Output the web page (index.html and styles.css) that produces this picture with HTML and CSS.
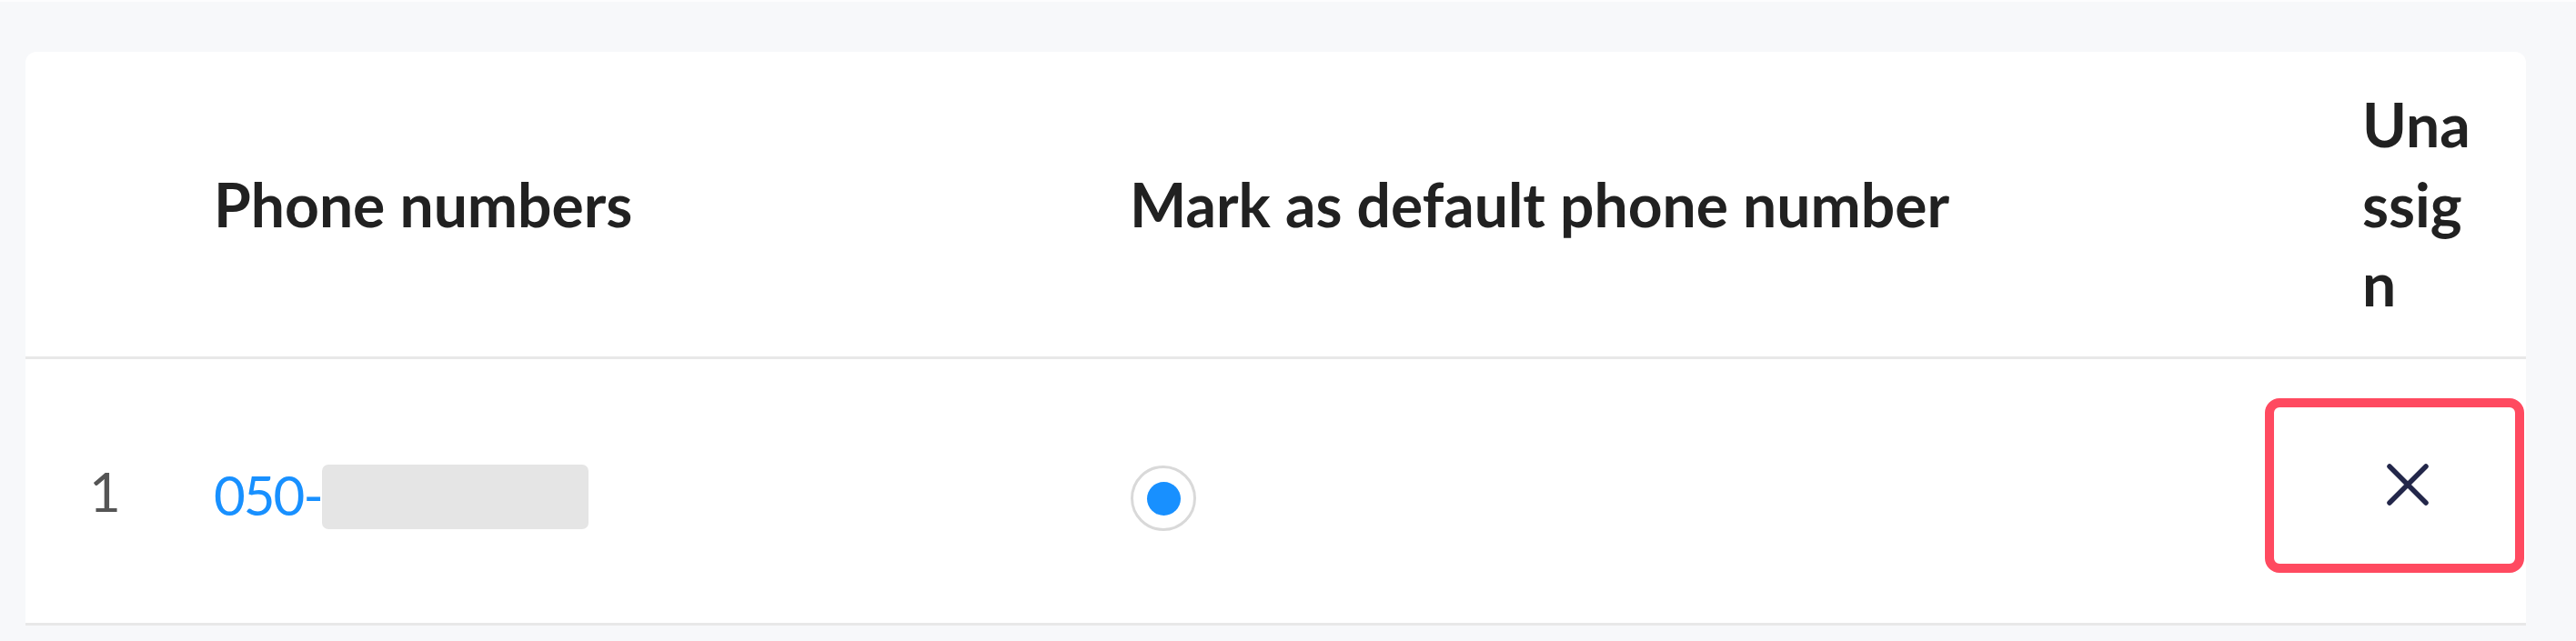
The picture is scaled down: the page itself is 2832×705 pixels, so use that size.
FILE: index.html
```html
<!DOCTYPE html>
<html lang="en">
<head>
<meta charset="utf-8">
<title>Phone numbers</title>
<link rel="stylesheet" href="styles.css">
</head>
<body>
<div class="page">
  <div class="card">
    <table class="phones">
      <colgroup>
        <col class="c-index">
        <col class="c-number">
        <col class="c-default">
        <col class="c-unassign">
      </colgroup>
      <thead>
        <tr>
          <th class="cell-index"></th>
          <th>Phone numbers</th>
          <th>Mark as default phone number</th>
          <th class="cell-unassign">Unassign</th>
        </tr>
      </thead>
      <tbody>
        <tr>
          <td class="cell-index">1</td>
          <td><a class="number" href="#">050-</a><span class="redacted"></span></td>
          <td><span class="radio"><span class="radio-dot"></span></span></td>
          <td class="cell-unassign">
            <button class="unassign" type="button" aria-label="Unassign">
              <svg width="48" height="48" viewBox="0 0 48 48"><path d="M4 4 L44 44 M44 4 L4 44" stroke="#23274a" stroke-width="5.5" stroke-linecap="round" fill="none"/></svg>
            </button>
            <span class="highlight"></span>
          </td>
        </tr>
      </tbody>
    </table>
  </div>
</div>
</body>
</html>
```
FILE: styles.css
```css
html, body {
  margin: 0;
  padding: 0;
}
body {
  background: #f7f8fa;
  font-family: "Lato", "Liberation Sans", sans-serif;
  color: #262626;
}
.page {
  border-top: 2px solid #fdfdfe;
  padding: 55px 55px 17px 28px;
  border-bottom: 3px solid #fdfdfe;
}
.card {
  background: #ffffff;
  border-radius: 12px 12px 0 0;
}
.phones {
  width: 100%;
  table-layout: fixed;
  border-collapse: separate;
  border-spacing: 0;
}
.c-index { width: 207px; }
.c-number { width: 1007px; }
.c-default { width: 1355px; }
.c-unassign { width: 180px; }

.phones th {
  font-size: 66px;
  font-weight: 700;
  line-height: 87.5px;
  text-align: left;
  color: #212121;
  padding: 36px 0 36px 0;
  height: 263px;
  border-bottom: 3px solid #e8e8e8;
  vertical-align: middle;
}
.phones td {
  font-size: 60px;
  line-height: 80px;
  height: 290px;
  padding: 0;
  border-bottom: 3px solid #e8e8e8;
  vertical-align: middle;
}
.phones .cell-index {
  padding-left: 70px;
  color: #555555;
}
.phones th.cell-unassign {
  padding-right: 50px;
  word-break: break-all;
}
.phones td.cell-unassign {
  position: relative;
}
.number {
  color: #1890ff;
  text-decoration: none;
  letter-spacing: -2px;
  vertical-align: middle;
}
.redacted {
  display: inline-block;
  width: 293px;
  height: 71px;
  margin-left: 0;
  background: #e5e5e5;
  border-radius: 7px;
  vertical-align: middle;
  position: relative;
  top: 3px;
}
.radio {
  display: inline-flex;
  align-items: center;
  justify-content: center;
  width: 72px;
  height: 72px;
  box-sizing: border-box;
  border: 3px solid #d9d9d9;
  border-radius: 50%;
  background: #ffffff;
  vertical-align: middle;
  margin-left: 1px;
  margin-top: 10px;
}
.radio-dot {
  width: 37px;
  height: 37px;
  border-radius: 50%;
  background: #1890ff;
}
.unassign {
  display: flex;
  align-items: center;
  justify-content: center;
  width: 100px;
  height: 48px;
  padding: 0;
  margin: 0 0 14px 0;
  border: 0;
  background: transparent;
  cursor: pointer;
}
.unassign svg {
  display: block;
}
.highlight {
  position: absolute;
  left: -107px;
  top: 43px;
  width: 285px;
  height: 192px;
  box-sizing: border-box;
  border: 10px solid #ff4a60;
  border-radius: 16px;
  pointer-events: none;
}
```
